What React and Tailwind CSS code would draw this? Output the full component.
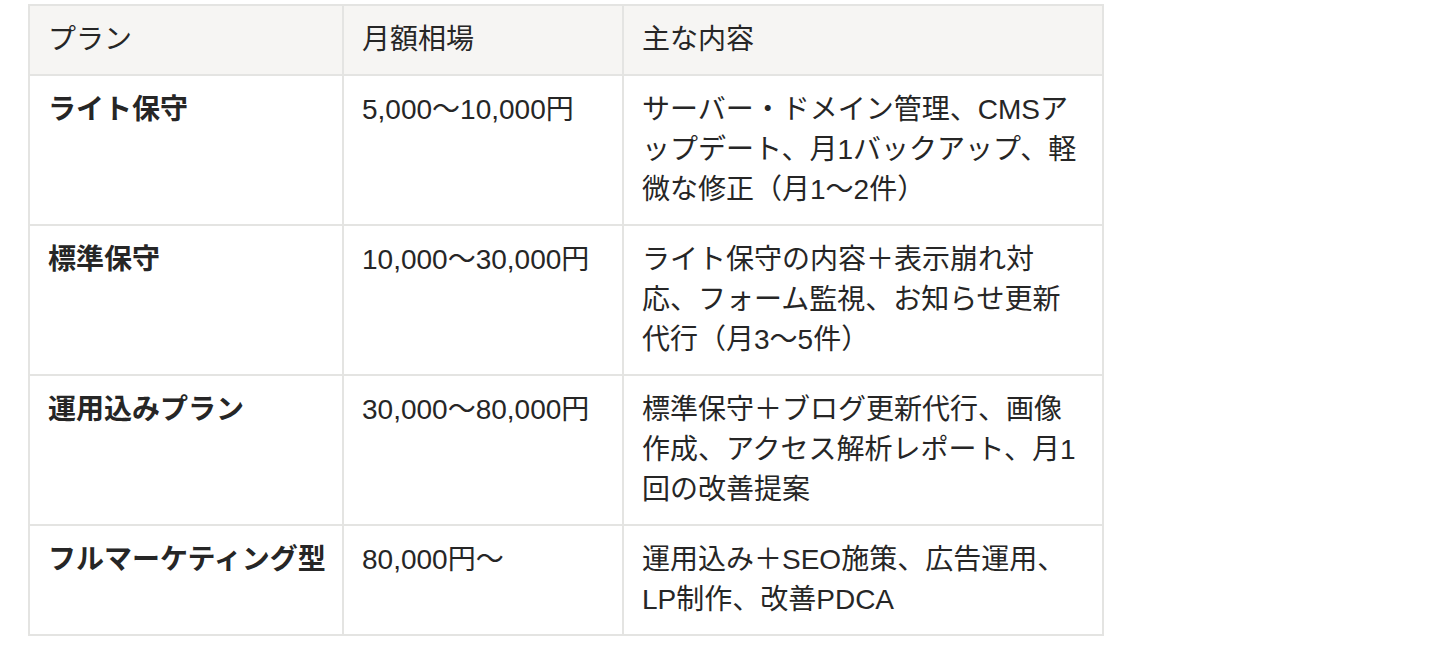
import React from "react";

const rows = [
  {
    plan: "ライト保守",
    price: "5,000〜10,000円",
    content: ["サーバー・ドメイン管理、CMSア", "ップデート、月1バックアップ、軽", "微な修正（月1〜2件）"],
  },
  {
    plan: "標準保守",
    price: "10,000〜30,000円",
    content: ["ライト保守の内容＋表示崩れ対", "応、フォーム監視、お知らせ更新", "代行（月3〜5件）"],
  },
  {
    plan: "運用込みプラン",
    price: "30,000〜80,000円",
    content: ["標準保守＋ブログ更新代行、画像", "作成、アクセス解析レポート、月1", "回の改善提案"],
  },
  {
    plan: "フルマーケティング型",
    price: "80,000円〜",
    content: ["運用込み＋SEO施策、広告運用、", "LP制作、改善PDCA"],
  },
];

export default function App() {
  return (
    <div
      className="min-h-[646px] bg-white pl-[28px] pt-[4px] text-[#262626]"
      style={{ fontFamily: '"Liberation Sans", "Noto Sans CJK JP", sans-serif' }}
    >
      <table className="w-[1074px] table-fixed border-collapse border-2 border-[#e4e4e2] text-[28px] leading-[40px]">
        <colgroup>
          <col className="w-[314px]" />
          <col className="w-[280px]" />
          <col className="w-[480px]" />
        </colgroup>
        <thead>
          <tr className="bg-[#f6f5f3]">
            <th className="border-2 border-[#e4e4e2] px-[18px] py-[14px] text-left font-normal align-top">プラン</th>
            <th className="border-2 border-[#e4e4e2] px-[18px] py-[14px] text-left font-normal align-top">月額相場</th>
            <th className="border-2 border-[#e4e4e2] px-[18px] py-[14px] text-left font-normal align-top">主な内容</th>
          </tr>
        </thead>
        <tbody>
          {rows.map((r) => (
            <tr key={r.plan}>
              <td className="border-2 border-[#e4e4e2] px-[18px] py-[14px] align-top font-bold whitespace-nowrap">{r.plan}</td>
              <td className="border-2 border-[#e4e4e2] px-[18px] py-[14px] align-top whitespace-nowrap">{r.price}</td>
              <td className="border-2 border-[#e4e4e2] px-[18px] py-[14px] align-top">
                {r.content.map((line, i) => (
                  <React.Fragment key={i}>
                    {i > 0 && <br />}
                    {line}
                  </React.Fragment>
                ))}
              </td>
            </tr>
          ))}
        </tbody>
      </table>
    </div>
  );
}
